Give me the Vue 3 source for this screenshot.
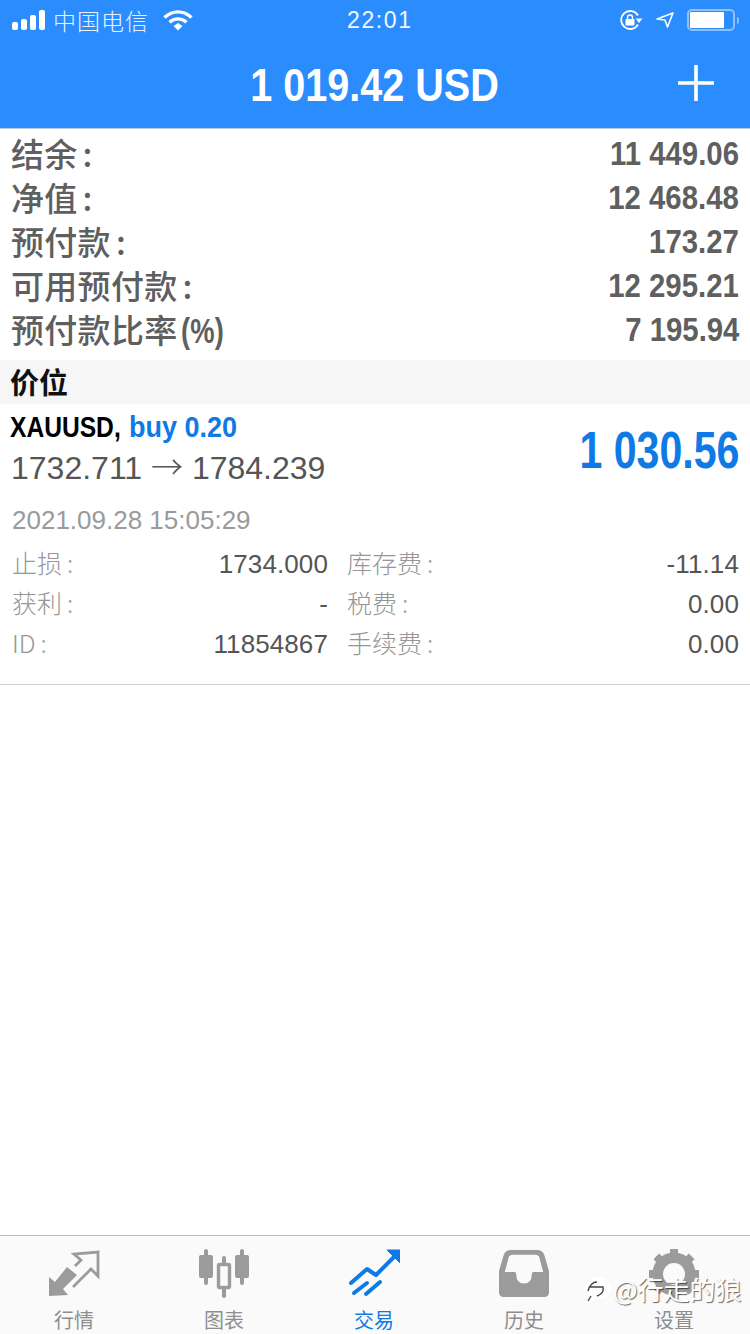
<script setup>
const summary = [
  { label: '结余', colon: true, value: '11 449.06' },
  { label: '净值', colon: true, value: '12 468.48' },
  { label: '预付款', colon: true, value: '173.27' },
  { label: '可用预付款', colon: true, value: '12 295.21' },
  { label: '预付款比率', pct: true, value: '7 195.94' },
]
const details = [
  ['止损', '1734.000', '库存费', '-11.14'],
  ['获利', '-', '税费', '0.00'],
  ['ID', '11854867', '手续费', '0.00'],
]
</script>

<template>
  <div class="page">
    <header class="head">
      <div class="status">
        <div class="st-left">
          <div class="signal"><i class="b1"></i><i class="b2"></i><i class="b3"></i><i class="b4"></i></div>
          <span class="carrier">中国电信</span>
          <svg class="wifi" width="30" height="22" viewBox="0 0 30 22">
            <path d="M1.5 8.5C9.5 1 20.5 1 28.5 8.5" fill="none" stroke="#fff" stroke-width="3.4"/>
            <path d="M6.5 13.2C11.5 8.8 18.5 8.8 23.5 13.2" fill="none" stroke="#fff" stroke-width="3.4"/>
            <path d="M10.5 17L15 14L19.5 17L15 21.5Z" fill="#fff"/>
          </svg>
        </div>
        <span class="clock">22:01</span>
        <div class="st-right">
          <svg width="24" height="20" viewBox="0 0 24 20">
            <path d="M19 5.5A9 9 0 1 0 19 14.5" fill="none" stroke="#fff" stroke-width="1.8"/>
            <path d="M16.5 8.5H23.5L20 13Z" fill="#fff"/>
            <rect x="6.5" y="9" width="9" height="6.5" rx="1" fill="#fff"/>
            <path d="M8.5 9V7.5a2.5 2.5 0 0 1 5 0V9" fill="none" stroke="#fff" stroke-width="1.4"/>
          </svg>
          <svg width="18" height="16" viewBox="0 0 18 16">
            <path d="M1 7L17 1L11.5 15L9 8Z" fill="none" stroke="#fff" stroke-width="1.6" stroke-linejoin="round"/>
          </svg>
          <div class="battery"><div class="cell"><i></i></div><b></b></div>
        </div>
      </div>
      <div class="title-row">
        <h1 class="balance">1 019.42 USD</h1>
        <svg class="plus" width="36" height="36" viewBox="0 0 36 36">
          <path d="M18 0V36M0 18H36" stroke="#fff" stroke-width="3.6"/>
        </svg>
      </div>
    </header>

    <section class="summary">
      <div v-for="r in summary" :key="r.label" class="sum-row">
        <span class="sum-label">{{ r.label }}<span v-if="r.colon" class="colon">:</span><span v-if="r.pct" class="pct">(%)</span></span>
        <span class="sum-value">{{ r.value }}</span>
      </div>
    </section>

    <div class="section-head"><span>价位</span></div>

    <section class="position">
      <div class="pos-top">
        <div>
          <div class="pos-name"><span class="sym">XAUUSD,</span><span class="side">buy 0.20</span></div>
          <div class="pos-price">1732.711 <span class="arrow">→</span> 1784.239</div>
        </div>
        <div class="pos-profit">1 030.56</div>
      </div>
      <div class="pos-date">2021.09.28 15:05:29</div>
      <div class="grid">
        <div v-for="d in details" :key="d[0]" class="grid-row">
          <div class="cell-pair"><span class="k">{{ d[0] }}<span class="k-colon">:</span></span><span class="v">{{ d[1] }}</span></div>
          <div class="cell-pair"><span class="k">{{ d[2] }}<span class="k-colon">:</span></span><span class="v">{{ d[3] }}</span></div>
        </div>
      </div>
    </section>

    <div class="spacer"></div>

    <nav class="tabs">
      <div class="tab">
        <svg width="54" height="50" viewBox="0 0 54 50">
          <path d="M2 28L8 33L20 18L30 26L16 40L21 46L2 47Z" fill="#9b9b9b"/>
          <path d="M28 17L34 11L27 5L51 3V27L44 20L26 38" fill="none" stroke="#9b9b9b" stroke-width="2.8"/>
        </svg>
        <span>行情</span>
      </div>
      <div class="tab">
        <svg width="52" height="50" viewBox="0 0 52 50">
          <g fill="#9b9b9b">
            <rect x="6" y="0" width="4" height="36" rx="2"/><rect x="1" y="6" width="14" height="23" rx="2"/>
            <rect x="42" y="0" width="4" height="36" rx="2"/><rect x="37" y="6" width="14" height="23" rx="2"/>
            <rect x="24" y="7" width="4" height="42" rx="2"/>
          </g>
          <rect x="20.5" y="15.5" width="11" height="23" rx="1" fill="#fafafa" stroke="#9b9b9b" stroke-width="3.4"/>
        </svg>
        <span>图表</span>
      </div>
      <div class="tab active">
        <svg width="52" height="50" viewBox="0 0 52 50">
          <g fill="none" stroke="#0f7ae5" stroke-width="4" stroke-linecap="round" stroke-linejoin="round">
            <path d="M3 34L19 20L28 26L47 7"/>
            <path d="M6 44L19 34"/>
            <path d="M18 45L32 33"/>
          </g>
          <path d="M39 1H52V14Z" fill="#0f7ae5" stroke="#0f7ae5" stroke-linejoin="round"/>
        </svg>
        <span>交易</span>
      </div>
      <div class="tab">
        <svg width="50" height="50" viewBox="0 0 52 50">
          <path fill-rule="evenodd" fill="#9b9b9b" d="M12 0H40Q45 0 47 5L52 22V44Q52 49 47 49H5Q0 49 0 44V22L5 5Q7 0 12 0ZM14 5Q11 5 10 8L6 23H16Q18 23 18 26Q18 35 26 35Q34 35 34 26Q34 23 36 23H46L42 8Q41 5 38 5Z"/>
        </svg>
        <span>历史</span>
      </div>
      <div class="tab">
        <svg width="52" height="50" viewBox="0 0 52 50">
          <g stroke="#9b9b9b" stroke-width="8">
            <path d="M26 0V50M1 25H51M8.3 7.3L43.7 42.7M43.7 7.3L8.3 42.7"/>
          </g>
          <circle cx="26" cy="25" r="15" fill="none" stroke="#9b9b9b" stroke-width="13"/>
          <circle cx="26" cy="25" r="11" fill="#fafafa"/>
        </svg>
        <span>设置</span>
      </div>
    </nav>

    <div class="watermark">
      <svg width="28" height="28" viewBox="0 0 28 28">
        <path d="M14 2C7 2 1 7 1 13C1 17 3 20 6 22L3 27L12 24C20 24 27 20 27 13C27 7 21 2 14 2Z" fill="#fff"/>
        <path d="M4 16C6 9 9 7 13 7M6 12H19C20 16 18 19 13 21M7 21L4 26" fill="none" stroke="#444" stroke-width="1.4"/>
      </svg>
      <span>@行走的狼</span>
    </div>
  </div>
</template>

<style>
html, body { margin: 0; background: #fff; }
</style>

<style scoped>
.page {
  position: relative;
  width: 750px;
  height: 1334px;
  display: flex;
  flex-direction: column;
  overflow: hidden;
  background: #fff;
  font-family: "Liberation Sans", "Noto Sans CJK SC", sans-serif;
}
.head {
  height: 129px;
  flex: none;
  box-sizing: border-box;
  background: #2b8cfd;
  border-bottom: 1px solid #b4c9e0;
  color: #fff;
}
.status {
  height: 40px;
  display: flex;
  align-items: center;
  justify-content: space-between;
  padding: 0 11px 0 12px;
  position: relative;
}
.st-left { display: flex; align-items: center; }
.signal { display: flex; align-items: flex-end; gap: 3px; height: 20px; margin-right: 8px; }
.signal i { width: 6px; background: #fff; border-radius: 2px; display: block; }
.b1 { height: 8px; } .b2 { height: 11px; } .b3 { height: 15px; } .b4 { height: 20px; }
.carrier { font-size: 23px; letter-spacing: 1px; font-family: "Noto Sans CJK SC", sans-serif; font-weight: 300; margin-right: 14px; color: #e8f2ff; }
.clock { position: absolute; left: 347px; font-size: 23px; letter-spacing: 1.6px; color: #f2f7ff; }
.st-right { display: flex; align-items: center; gap: 13px; }
.battery { display: flex; align-items: center; gap: 2px; }
.cell { width: 42px; height: 16px; border: 2px solid #8fc0fb; border-radius: 5px; padding: 1px; box-sizing: content-box; }
.cell i { display: block; width: 34px; height: 16px; background: #fff; border-radius: 1px; }
.battery b { width: 2px; height: 7px; background: #8fc0fb; border-radius: 0 2px 2px 0; }
.title-row { height: 88px; position: relative; display: flex; align-items: center; justify-content: center; }
.balance { margin: 0; font-size: 46px; font-weight: 700; white-space: nowrap; transform: translate(-1px, 1px) scaleX(.86); }
.plus { position: absolute; right: 36px; top: 25px; }

.summary { padding-top: 3px; height: 231px; flex: none; box-sizing: border-box; }
.sum-row { height: 44px; display: flex; justify-content: space-between; align-items: center; padding: 0 11px; color: #5f5f5f; }
.sum-label { font-size: 33px; line-height: 40px; letter-spacing: .3px; font-family: "Noto Sans CJK SC", sans-serif; font-weight: 500; margin-bottom: 3px; white-space: nowrap; }
.colon { margin-left: 5px; }
.pct { display: inline-block; width: 43px; margin-left: 3px; font-family: "Liberation Sans", sans-serif; font-size: 35px; line-height: 1; font-weight: 700; transform: scaleX(.78); transform-origin: left center; }
.sum-value { font-size: 33px; font-weight: 700; white-space: nowrap; transform: scaleX(.89); transform-origin: right center; }

.section-head { height: 44px; flex: none; background: #f6f6f6; padding-left: 10px; font-size: 29px; font-weight: 700; color: #111; display: flex; align-items: center; font-family: "Noto Sans CJK SC", sans-serif; }
.section-head span { margin-bottom: 2px; }

.position { flex: none; height: 281px; box-sizing: border-box; border-bottom: 1px solid #cfcfcf; padding: 6px 11px 0 11px; }
.pos-top { display: flex; justify-content: space-between; align-items: center; height: 80px; }
.pos-name { display: flex; font-weight: 700; font-size: 30px; line-height: 34px; margin-left: -1px; white-space: nowrap; }
.sym { color: #000; display: inline-block; width: 119px; transform: scaleX(.82); transform-origin: left center; }
.side { color: #0f7ae5; display: inline-block; transform: scaleX(.9); transform-origin: left center; }
.pos-price { font-size: 32px; line-height: 44px; color: #555; white-space: nowrap; margin-top: -1px; }
.arrow { font-family: "Noto Sans CJK SC", sans-serif; font-weight: 300; }
.pos-profit { font-weight: 700; font-size: 52px; color: #0f7ae5; white-space: nowrap; transform: scaleX(.79); transform-origin: right center; }
.pos-date { font-size: 26px; color: #9a9a9a; margin-top: 15px; line-height: 30px; margin-left: 1px; }
.grid { margin-top: 8px; }
.grid-row { height: 40px; display: grid; grid-template-columns: 317px 1fr; column-gap: 18px; align-items: center; }
.cell-pair { display: flex; justify-content: space-between; align-items: center; }
.k { font-size: 25px; line-height: 30px; color: #969696; margin-left: 1px; font-family: "Noto Sans CJK SC", sans-serif; font-weight: 300; margin-bottom: 2px; }
.k-colon { margin-left: 5px; color: #aaa; }
.v { font-size: 26px; color: #555; letter-spacing: .1px; margin-top: 2px; }

.spacer { flex: 1; }
.tabs { flex: none; height: 99px; box-sizing: border-box; background: #fafafa; border-top: 1px solid #bdbdbd; display: grid; grid-template-columns: repeat(5, 1fr); }
.tab { display: flex; flex-direction: column; align-items: center; padding: 13px 2px 0 0; color: #8e8e8e; font-size: 20px; font-family: "Noto Sans CJK SC", sans-serif; }
.tab svg { display: block; height: 50px; }
.tab span { margin-top: 8px; line-height: 26px; }
.tab.active { color: #0f7ae5; }
.watermark { position: absolute; left: 584px; top: 1270px; display: flex; align-items: center; gap: 1px; color: #fff; font-size: 26px; font-family: "Noto Sans CJK SC", sans-serif; text-shadow: 1px 1px 1px rgba(0,0,0,.6); }
</style>
